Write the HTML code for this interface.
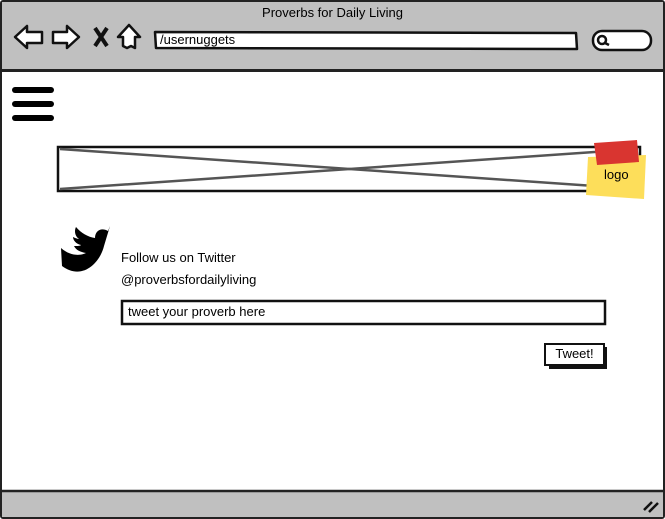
<!DOCTYPE html>
<html><head><style>
*{margin:0;padding:0;box-sizing:border-box}
body{width:665px;height:519px;background:#fff;position:relative;overflow:hidden;font-family:"Liberation Sans",sans-serif;color:#000}
.a{position:absolute}
</style></head><body>
<div class="a" style="left:0;top:0;width:665px;height:519px;border:2px solid #222;border-radius:3px"></div>
<div class="a" style="left:2px;top:2px;width:661px;height:70px;background:#c0c0c0;border-bottom:3px solid #222"></div>
<div class="a" style="left:0;top:5px;width:665px;text-align:center;font-size:13px">Proverbs for Daily Living</div>
<svg class="a" style="left:0;top:0" width="665" height="72">
<g fill="#fff" stroke="#111" stroke-width="2.5" stroke-linejoin="round">
<path d="M15 37 L27 26 L27 32 L42 32 L42 43 L27 43 L27 48 Z"/>
<path d="M79 37 L67 26 L67 32 L53 32 L53 43 L67 43 L67 48 Z"/>
<path d="M129 25 L140 37 L135 37 L135 48 L131 46 L127 48 L123 46 L123 37 L118 37 Z"/>
<path d="M155 32 L576 33 L577 49 L156 48 Z" stroke-width="2.5"/>
<rect x="593" y="31" width="58" height="19" rx="9"/>
</g>
<path d="M95 28 L107 46 M107 28 L95 46" stroke="#111" stroke-width="4"/>
<circle cx="602" cy="40" r="4" fill="none" stroke="#111" stroke-width="2.5"/>
<path d="M605 43 L609 45" stroke="#111" stroke-width="2.5"/>
</svg>
<div class="a" style="left:160px;top:32px;font-size:13px">/usernuggets</div>
<div class="a" style="left:12px;top:87px;width:42px;height:6px;background:#000;border-radius:3px"></div>
<div class="a" style="left:12px;top:101px;width:42px;height:6px;background:#000;border-radius:3px"></div>
<div class="a" style="left:12px;top:115px;width:42px;height:6px;background:#000;border-radius:3px"></div>
<svg class="a" style="left:0;top:0" width="665" height="519">
<rect x="58" y="147" width="582" height="44" fill="#fff" stroke="#111" stroke-width="2.5"/>
<path d="M60 149 L638 189 M60 189 L638 149" stroke="#555" stroke-width="2.5"/>
<path d="M588 157 L646 155 L644 199 L586 195 Z" fill="#fdde5a"/>
<path d="M594 143 L637 140 L639 162 L597 165 Z" fill="#d93530"/>
<path d="M61 248 C70 256 80 256 86 253 C80 252 76 250 74 246 C78 246 80 246 81 245 C76 244 73 240 73 237 C75 238 78 239 79 239 C75 236 74 231 76 227 C81 233 88 237 95 238 C95 231 101 227 108 231 L110 226 L104 246 C100 263 82 281 62 266 Z" fill="#000"/>
<rect x="122" y="301" width="483" height="23" fill="#fff" stroke="#111" stroke-width="2.5"/>
<rect x="549" y="347" width="58" height="22" fill="#111"/>
<rect x="545" y="344" width="59" height="21" fill="#fff" stroke="#111" stroke-width="2"/>
<rect x="2" y="491" width="661" height="26" fill="#c0c0c0"/>
<path d="M2 491 L663 491" stroke="#222" stroke-width="2.5"/>
<path d="M644 510 L652 502 M649 512 L658 503" stroke="#111" stroke-width="2.5"/>
</svg>
<div class="a" style="left:604px;top:167px;font-size:13px">logo</div>
<div class="a" style="left:121px;top:250px;font-size:13px">Follow us on Twitter</div>
<div class="a" style="left:121px;top:272px;font-size:13px">@proverbsfordailyliving</div>
<div class="a" style="left:128px;top:304px;font-size:13px">tweet your proverb here</div>
<div class="a" style="left:545px;top:346px;width:59px;text-align:center;font-size:13px">Tweet!</div>
</body></html>
